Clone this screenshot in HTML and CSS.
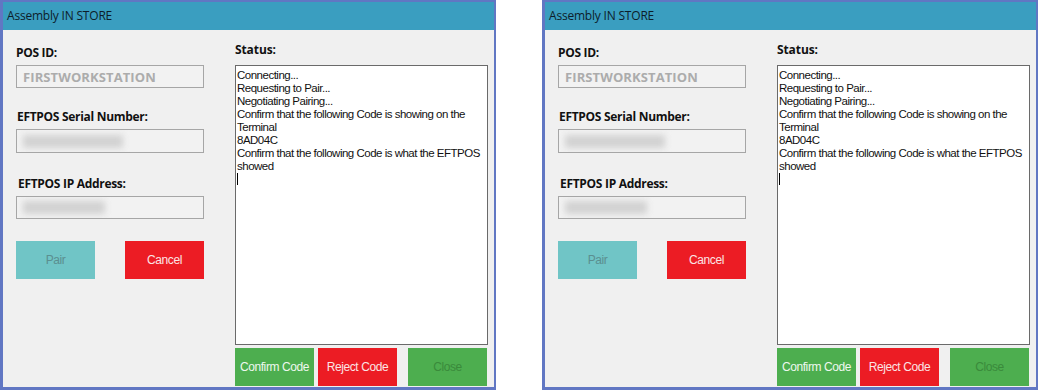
FILE: index.html
```html
<!DOCTYPE html>
<html lang="en">

<head>
    <meta charset="UTF-8">
    <meta name="viewport" content="width=device-width, initial-scale=1.0">
    <title>Assembly IN STORE</title>
    <link rel="stylesheet" href="styles.css">
</head>

<body>
    <div class="shots">
        <div class="window">
            <div class="title_bar">Assembly IN STORE</div>
            <div class="content">
                <div class="form_col">
                    <div class="label first">POS ID:</div>
                    <div class="field"><span class="pos_id">FIRSTWORKSTATION</span></div>
                    <div class="label second">EFTPOS Serial Number:</div>
                    <div class="field tall"><span class="blur serial"></span></div>
                    <div class="label third">EFTPOS IP Address:</div>
                    <div class="field"><span class="blur ip"></span></div>
                    <div class="btn_row">
                        <span class="btn pair">Pair</span>
                        <span class="btn red">Cancel</span>
                    </div>
                </div>
                <div class="status_col">
                    <div class="label status_label">Status:</div>
                    <div class="status_box">Connecting...<br>Requesting to Pair...<br>Negotiating Pairing...<br>Confirm that the following Code is showing on the Terminal<br>8AD04C<br>Confirm that the following Code is what the EFTPOS showed<br><span class="caret"></span></div>
                    <div class="btn_row bottom">
                        <span class="btn green">Confirm Code</span>
                        <span class="btn red">Reject Code</span>
                        <span class="btn green off">Close</span>
                    </div>
                </div>
            </div>
        </div>
        <div class="window">
            <div class="title_bar">Assembly IN STORE</div>
            <div class="content">
                <div class="form_col">
                    <div class="label first">POS ID:</div>
                    <div class="field"><span class="pos_id">FIRSTWORKSTATION</span></div>
                    <div class="label second">EFTPOS Serial Number:</div>
                    <div class="field tall"><span class="blur serial"></span></div>
                    <div class="label third">EFTPOS IP Address:</div>
                    <div class="field"><span class="blur ip"></span></div>
                    <div class="btn_row">
                        <span class="btn pair">Pair</span>
                        <span class="btn red">Cancel</span>
                    </div>
                </div>
                <div class="status_col">
                    <div class="label status_label">Status:</div>
                    <div class="status_box">Connecting...<br>Requesting to Pair...<br>Negotiating Pairing...<br>Confirm that the following Code is showing on the Terminal<br>8AD04C<br>Confirm that the following Code is what the EFTPOS showed<br><span class="caret"></span></div>
                    <div class="btn_row bottom">
                        <span class="btn green">Confirm Code</span>
                        <span class="btn red">Reject Code</span>
                        <span class="btn green off">Close</span>
                    </div>
                </div>
            </div>
        </div>
    </div>
</body>

</html>
```

FILE: styles.css
```css
body {
    margin: 0;
    background: #fff;
    font-family: "Liberation Sans", Arial, sans-serif;
}

.shots {
    display: flex;
    gap: 46px;
    width: 1038px;
    height: 391px;
}

.window {
    width: 496px;
    height: 390px;
    box-sizing: border-box;
    border: 2px solid #6177c3;
    border-left-width: 3px;
    border-bottom-width: 3px;
    background: #f0f0f0;
    display: flex;
    flex-direction: column;
}

.title_bar {
    height: 28px;
    line-height: 27px;
    background: #3a9ec0;
    color: #0d1d2a;
    font-family: "Open Sans", sans-serif;
    font-size: 12px;
    padding-left: 4px;
    letter-spacing: -0.2px;
}

.content {
    display: flex;
    flex: 1;
}

.form_col {
    width: 188px;
    padding-left: 13px;
}

.label {
    font-family: "Open Sans", sans-serif;
    font-weight: bold;
    font-size: 12px;
    line-height: 16px;
    color: #111;
    margin-top: 21px;
    margin-bottom: 4px;
    letter-spacing: -0.3px;
}

.label.first {
    margin-top: 15px;
}

.label.second {
    padding-left: 1px;
}

.label.third {
    margin-top: 23px;
    padding-left: 2px;
}

.field {
    height: 23px;
    box-sizing: border-box;
    border: 1px solid #a6a6a6;
    background: #f2f2f2;
    display: flex;
    align-items: center;
    padding-left: 6px;
    overflow: hidden;
}

.field.tall {
    height: 24px;
}

.pos_id {
    font-family: "Open Sans", sans-serif;
    font-weight: bold;
    font-size: 13px;
    color: #acacac;
    letter-spacing: 0.1px;
}

.blur {
    display: block;
    height: 13px;
    background: #d2d2d2;
    filter: blur(3px);
}

.blur.serial {
    width: 100px;
}

.blur.ip {
    width: 82px;
}

.btn_row {
    display: flex;
    justify-content: space-between;
    margin-top: 22px;
}

.btn {
    width: 79px;
    height: 38px;
    line-height: 38px;
    text-align: center;
    font-size: 12px;
    letter-spacing: -0.4px;
}

.pair {
    background: #70c5c6;
    color: #5b8f90;
}

.red {
    background: #ec1c24;
    color: #fbe4e4;
}

.green {
    background: #4dae4f;
    color: #eef8ee;
}

.green.off {
    color: #3a8a3b;
    margin-left: 7px;
}

.status_col {
    margin-left: 31px;
    width: 253px;
}

.status_label {
    margin-top: 12px;
    margin-bottom: 7px;
    letter-spacing: -0.1px;
}

.status_box {
    height: 280px;
    box-sizing: border-box;
    border: 1px solid #6a6a6a;
    background: #fff;
    padding: 3px 1px 1px;
    font-size: 11.5px;
    line-height: 13px;
    letter-spacing: -0.5px;
    color: #111;
}

.caret {
    display: inline-block;
    width: 1px;
    height: 12px;
    background: #000;
}

.btn_row.bottom {
    margin-top: 3px;
    justify-content: flex-start;
    gap: 4px;
}
```
